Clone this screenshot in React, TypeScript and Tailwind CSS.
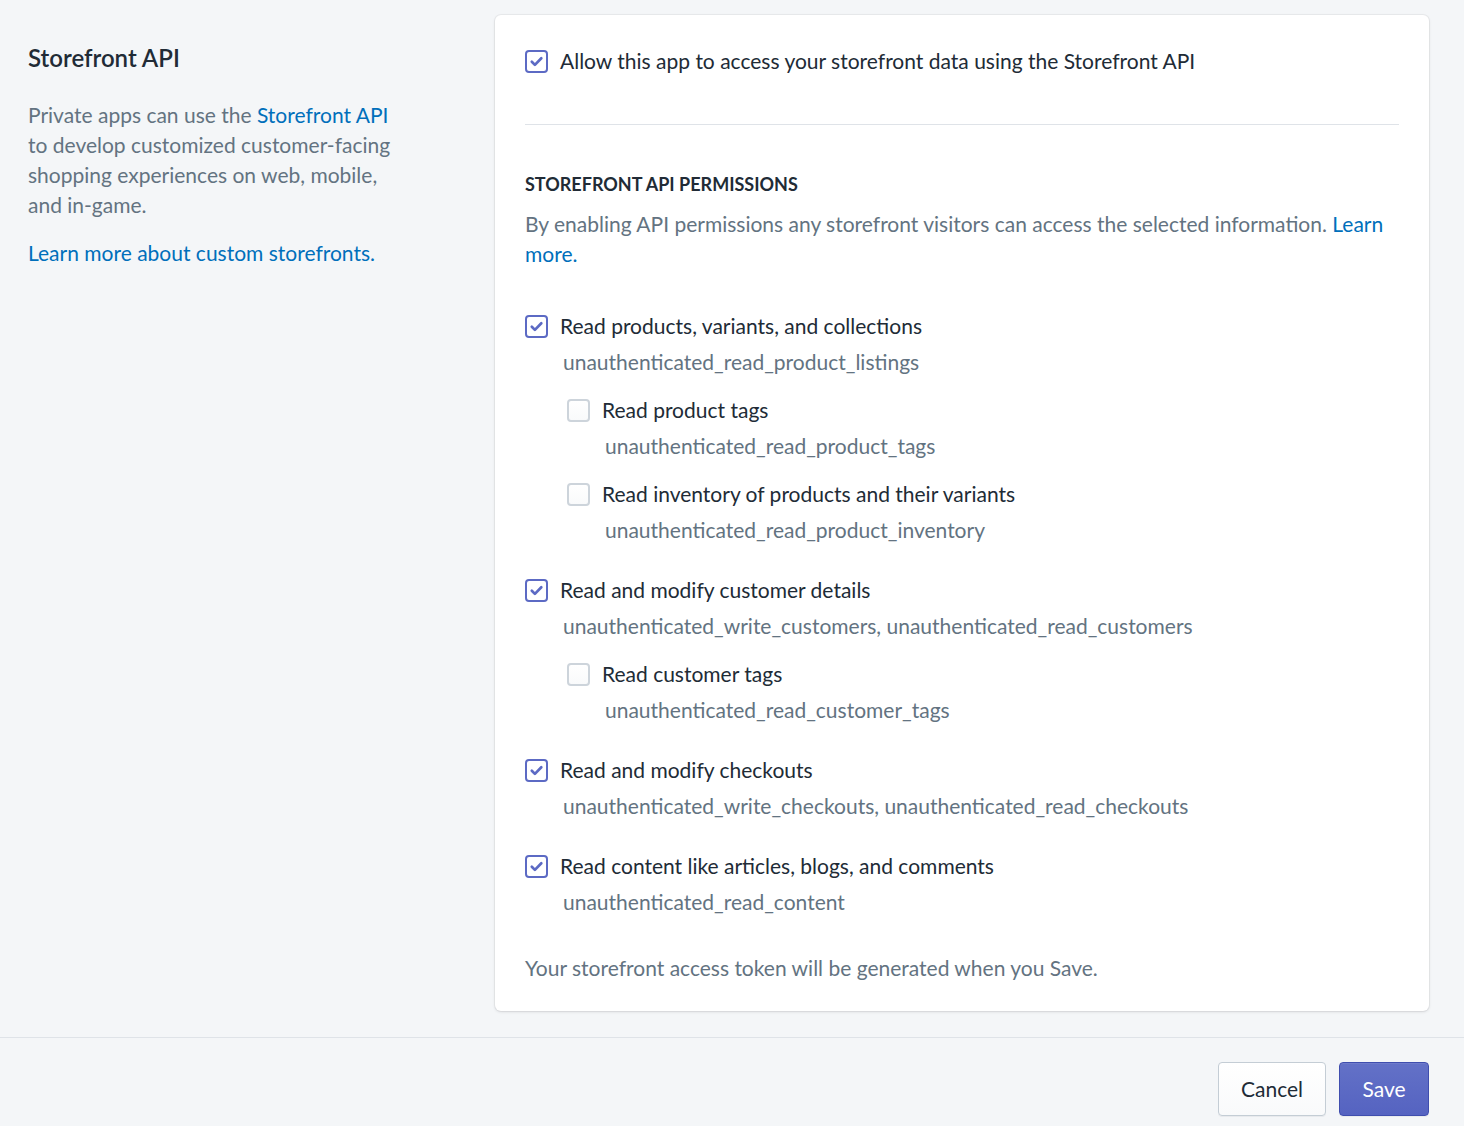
import React from 'react';

type Perm = {
  label: string;
  scope: string;
  checked: boolean;
  children?: Perm[];
};

const PERMISSIONS: Perm[] = [
  {
    label: 'Read products, variants, and collections',
    scope: 'unauthenticated_read_product_listings',
    checked: true,
    children: [
      { label: 'Read product tags', scope: 'unauthenticated_read_product_tags', checked: false },
      {
        label: 'Read inventory of products and their variants',
        scope: 'unauthenticated_read_product_inventory',
        checked: false,
      },
    ],
  },
  {
    label: 'Read and modify customer details',
    scope: 'unauthenticated_write_customers, unauthenticated_read_customers',
    checked: true,
    children: [{ label: 'Read customer tags', scope: 'unauthenticated_read_customer_tags', checked: false }],
  },
  {
    label: 'Read and modify checkouts',
    scope: 'unauthenticated_write_checkouts, unauthenticated_read_checkouts',
    checked: true,
  },
  {
    label: 'Read content like articles, blogs, and comments',
    scope: 'unauthenticated_read_content',
    checked: true,
  },
];

const Checkbox: React.FC<{ checked: boolean }> = ({ checked }) => (
  <span
    className={`w-[23px] h-[23px] shrink-0 rounded-[4px] border-[2px] flex items-center justify-center ${
      checked ? 'border-[#5c6ac4] bg-white' : 'border-[#cdd4db] bg-gradient-to-b from-white to-[#f9fafb]'
    }`}
  >
    {checked && (
      <svg viewBox="0 0 19 19" className="w-[19px] h-[19px]" fill="none" stroke="#5c6ac4" strokeWidth="2.7" strokeLinecap="round" strokeLinejoin="round">
        <path d="M4.8 9.8l3.1 3.1 6.4-6.6" />
      </svg>
    )}
  </span>
);

const PermRow: React.FC<{ perm: Perm }> = ({ perm }) => (
  <div>
    <label className="flex items-center gap-[12px] h-[30px] text-[#212b36] cursor-pointer">
      <Checkbox checked={perm.checked} />
      <span>{perm.label}</span>
    </label>
    <div className="mt-[6px] pl-[38px] h-[30px] text-[#637381]">{perm.scope}</div>
    {perm.children && (
      <div className="ml-[42px]">
        {perm.children.map((c) => (
          <div key={c.scope} className="mt-[18px]">
            <PermRow perm={c} />
          </div>
        ))}
      </div>
    )}
  </div>
);

export default function App() {
  return (
    <div
      className="min-h-screen bg-[#f4f6f8] text-[21px] leading-[30px] text-[#212b36]"
      style={{ fontFamily: '"Segoe UI", Lato, "Noto Sans", sans-serif' }}
    >
      <div className="flex pt-[15px]">
        <div className="w-[495px] shrink-0 pl-[28px] pt-[28px]">
          <h2 className="text-[24px] leading-[30px] font-semibold text-[#212b36]">Storefront API</h2>
          <p className="mt-[27px] w-[376px] text-[#637381]">
            Private apps can use the <a className="text-[#006fbb]">Storefront API</a> to develop customized
            customer-facing shopping experiences on web, mobile, and in-game.
          </p>
          <a className="block mt-[18px] text-[#006fbb]">Learn more about custom storefronts.</a>
        </div>

        <div className="w-[934px] bg-white rounded-[6px] shadow-[0_0_0_1px_rgba(63,63,68,0.05),0_1px_3px_0_rgba(63,63,68,0.15)] px-[30px] pt-[31px] pb-[28px]">
          <label className="flex items-center gap-[12px] h-[30px]">
            <Checkbox checked />
            <span>Allow this app to access your storefront data using the Storefront API</span>
          </label>

          <div className="mt-[48px] border-t border-[#dfe3e8]" />

          <h3 className="mt-[47px] text-[18px] leading-[24px] font-bold uppercase text-[#212b36]">
            Storefront API permissions
          </h3>
          <p className="mt-[13px] text-[#637381]">
            By enabling API permissions any storefront visitors can access the selected information.{' '}
            <a className="text-[#006fbb]">Learn</a> <a className="text-[#006fbb]">more.</a>
          </p>

          <div className="mt-[42px] flex flex-col gap-[30px]">
            {PERMISSIONS.map((p) => (
              <PermRow key={p.scope} perm={p} />
            ))}
          </div>

          <p className="mt-[36px] text-[#637381]">Your storefront access token will be generated when you Save.</p>
        </div>
      </div>

      <div className="mt-[26px] border-t border-[#dfe3e8] pt-[24px] pb-[24px] pr-[35px] flex justify-end gap-[13px]">
        <button className="h-[54px] w-[108px] rounded-[4px] border border-[#c4cdd5] bg-gradient-to-b from-white to-[#f9fafb] shadow-[0_1px_0_0_rgba(22,29,37,0.05)] text-[#212b36]">
          Cancel
        </button>
        <button className="h-[54px] w-[90px] rounded-[4px] border border-[#3f4eae] bg-gradient-to-b from-[#6371c7] to-[#5563c1] shadow-[inset_0_1px_0_0_#6f7bcb,0_1px_0_0_rgba(22,29,37,0.05)] text-white">
          Save
        </button>
      </div>
    </div>
  );
}
